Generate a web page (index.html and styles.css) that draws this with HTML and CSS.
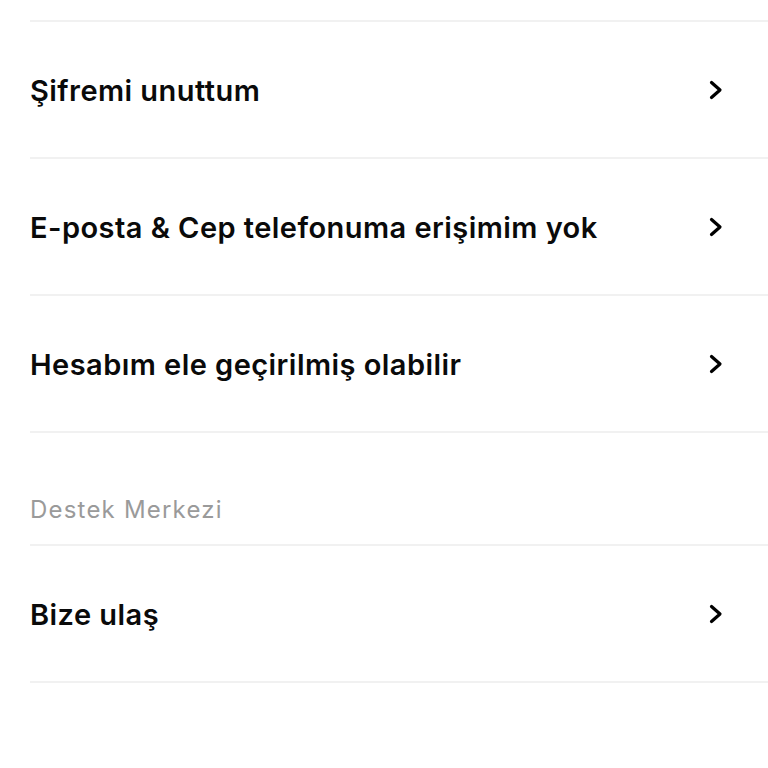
FILE: index.html
```html
<!DOCTYPE html>
<html lang="tr">
<head>
<meta charset="utf-8">
<link rel="stylesheet" href="styles.css">
</head>
<body>
<div class="list">
  <div class="top"></div>
  <a class="row">
    <span class="label">Şifremi unuttum</span>
    <svg class="chev" viewBox="0 0 14 20" width="14" height="20"><path d="M2.5 2.5 L11 10 L2.5 17.5" fill="none" stroke="#000" stroke-width="3.2" stroke-linecap="round" stroke-linejoin="round"/></svg>
  </a>
  <a class="row">
    <span class="label">E-posta &amp; Cep telefonuma erişimim yok</span>
    <svg class="chev" viewBox="0 0 14 20" width="14" height="20"><path d="M2.5 2.5 L11 10 L2.5 17.5" fill="none" stroke="#000" stroke-width="3.2" stroke-linecap="round" stroke-linejoin="round"/></svg>
  </a>
  <a class="row">
    <span class="label">Hesabım ele geçirilmiş olabilir</span>
    <svg class="chev" viewBox="0 0 14 20" width="14" height="20"><path d="M2.5 2.5 L11 10 L2.5 17.5" fill="none" stroke="#000" stroke-width="3.2" stroke-linecap="round" stroke-linejoin="round"/></svg>
  </a>
  <div class="section">Destek Merkezi</div>
  <a class="row">
    <span class="label">Bize ulaş</span>
    <svg class="chev" viewBox="0 0 14 20" width="14" height="20"><path d="M2.5 2.5 L11 10 L2.5 17.5" fill="none" stroke="#000" stroke-width="3.2" stroke-linecap="round" stroke-linejoin="round"/></svg>
  </a>
</div>
</body>
</html>
```
FILE: styles.css
```css
html, body {
  margin: 0;
  padding: 0;
  background: #ffffff;
}
body {
  font-family: Inter, "Noto Sans", "Liberation Sans", sans-serif;
  color: #0a0a0a;
}
.list {
  padding-left: 30px;
  display: flex;
  flex-direction: column;
}
.top {
  height: 20px;
  border-bottom: 2px solid #f1f1f1;
}
.row {
  height: 135px;
  border-bottom: 2px solid #f1f1f1;
  display: flex;
  align-items: center;
  justify-content: space-between;
  padding-right: 45px;
}
.label {
  font-size: 29px;
  font-weight: 600;
  letter-spacing: 0.45px;
  padding-top: 2px;
}
.chev {
  display: block;
}
.section {
  height: 113px;
  border-bottom: 2px solid #f1f1f1;
  display: flex;
  align-items: flex-end;
  box-sizing: border-box;
  padding-bottom: 20px;
  font-size: 24px;
  letter-spacing: 1.2px;
  color: #9a9a9a;
}
```
